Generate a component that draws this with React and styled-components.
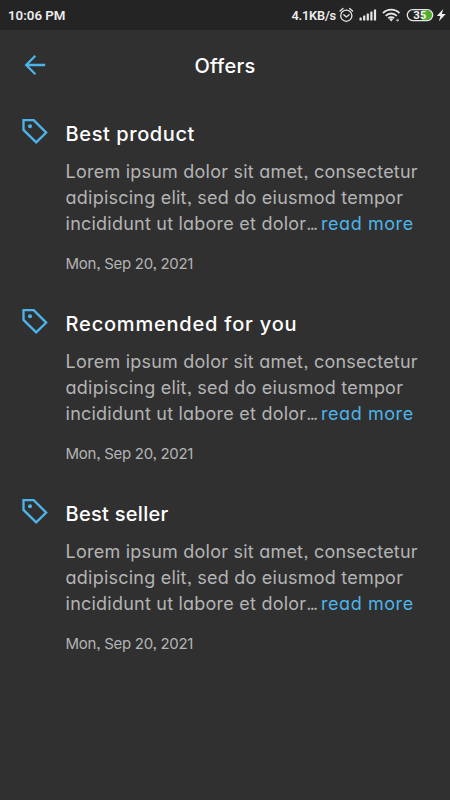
import React from 'react';
import styled, { createGlobalStyle } from 'styled-components';

const GlobalStyle = createGlobalStyle`
  * { box-sizing: border-box; }
  body { margin: 0; background: #303030; }
`;

const Screen = styled.div`
  width: 450px;
  height: 800px;
  overflow: hidden;
  background: #303030;
  color: #fff;
  font-family: Inter, 'Noto Sans', sans-serif;
  font-feature-settings: 'cv11' 1, 'ss03' 1;
`;

const StatusBar = styled.div`
  height: 30px;
  padding: 0 4px 0 8px;
  display: flex;
  align-items: center;
  justify-content: space-between;
  background: #242424;
  color: #ececec;
  font-family: Roboto, sans-serif;
  font-weight: 600;
`;

const Clock = styled.span`
  padding-top: 2px;
  font-size: 13.3px;
  line-height: 30px;
`;

const Speed = styled.span`
  padding-top: 2px;
  font-size: 12.8px;
  letter-spacing: -0.2px;
  line-height: 30px;
`;

const StatusGroup = styled.div`
  display: flex;
  align-items: center;
  height: 30px;
`;

const Header = styled.header`
  display: grid;
  grid-template-columns: 60px 1fr 60px;
  align-items: center;
  height: 70px;
`;

const BackButton = styled.button`
  display: flex;
  width: 24px;
  height: 24px;
  margin-left: 23px;
  padding: 0;
  border: 0;
  background: none;
  color: #4db4ea;
`;

const PageTitle = styled.h1`
  margin: 0;
  padding-top: 1px;
  text-align: center;
  font-size: 20px;
  font-weight: 500;
  line-height: 30px;
  letter-spacing: 0.3px;
`;

const OfferList = styled.main`
  display: flex;
  flex-direction: column;
  gap: 35px;
  padding: 19px 0 0 21px;
`;

const Offer = styled.article`
  display: grid;
  grid-template-columns: 28px 1fr;
  column-gap: 16px;
  height: 155px;
`;

const TagIcon = styled.svg`
  width: 28px;
  height: 28px;
  margin-top: -1px;
`;

const OfferTitle = styled.h2`
  margin: 0 0 10px;
  padding-left: 0.6px;
  font-size: 20px;
  font-weight: 500;
  line-height: 30px;
  letter-spacing: ${(p) => p.$spacing}px;
  white-space: nowrap;
`;

const Description = styled.p`
  margin: 0;
  padding-left: 0.6px;
  color: #b4b4b4;
  font-size: 18px;
  font-weight: 400;
  line-height: 26px;
  letter-spacing: 0.22px;
  white-space: nowrap;
`;

const Line = styled.span`
  display: block;
`;

const Dots = styled.span`
  letter-spacing: -1.8px;
`;

const ReadMore = styled.a`
  margin-left: 4.6px;
  color: #4db4ea;
  letter-spacing: 0.56px;
`;

const OfferDate = styled.time`
  display: block;
  margin-top: 17px;
  padding-left: 0.6px;
  color: #b4b4b4;
  font-size: 15px;
  line-height: 20px;
  letter-spacing: -0.28px;
`;

const offers = [
  { title: 'Best product', spacing: 0.58 },
  { title: 'Recommended for you', spacing: 0.8 },
  { title: 'Best seller', spacing: 0.28 },
];

function StatusIcons() {
  return (
    <svg width="110" height="30" viewBox="336 0 110 30" fill="none">
      <g stroke="#e6e6e6" strokeWidth="1.3" strokeLinecap="round" strokeLinejoin="round">
        <circle cx="346.3" cy="15.7" r="5.6" />
        <path d="M343.8 14.7l2.5 2.2 2.8-2.2M340 11l3-2.5M352.6 11l-3-2.5" />
      </g>
      <g fill="#e6e6e6">
        <rect x="359.5" y="17.5" width="2.2" height="3" rx=".5" />
        <rect x="363.1" y="15.5" width="2.2" height="5" rx=".5" />
        <rect x="366.7" y="13.5" width="2.2" height="7" rx=".5" />
        <rect x="370.3" y="11.5" width="2.2" height="9" rx=".5" />
        <rect x="373.9" y="9.5" width="2.2" height="11" rx=".5" />
      </g>
      <g stroke="#e6e6e6" strokeWidth="1.9">
        <path d="M383 13.1a11.5 11.5 0 0 1 16.4 0" />
        <path d="M385.7 15.8a7.7 7.7 0 0 1 11 0" />
        <path d="M388.3 18.3a4.1 4.1 0 0 1 5.8 0" />
      </g>
      <path d="M389.3 19.3a2.7 2.7 0 0 1 3.8 0l-1.9 2.1z" fill="#e6e6e6" />
      <circle cx="397.6" cy="20.3" r="1.3" fill="#a8a8a8" />
      <path d="M422 10.2h5.3a4.9 4.9 0 0 1 0 9.8H422z" fill="#4fae2c" />
      <rect x="407.3" y="9.6" width="25.4" height="11" rx="5.5" stroke="#e6e6e6" strokeWidth="1.3" />
      <text x="419.8" y="19.2" textAnchor="middle" fill="#f2f2f2" fontFamily="Roboto, sans-serif" fontSize="11.5" fontWeight="700">35</text>
      <path d="M443.2 9l-6.4 7h3.6l-1.5 5.3 6.9-7.2h-3.9z" fill="#eee" />
    </svg>
  );
}

function OfferItem({ title, spacing }) {
  return (
    <Offer>
      <TagIcon viewBox="0 0 28 28" fill="none">
        <path d="M2.5 2.2h10.2L25.2 14.6 15.2 24.3 2.5 11.9z" stroke="#4db4ea" strokeWidth="2.3" />
        <circle cx="9" cy="8.3" r="2" fill="#4db4ea" />
      </TagIcon>
      <div>
        <OfferTitle $spacing={spacing}>{title}</OfferTitle>
        <Description>
          <Line>Lorem ipsum dolor sit amet, consectetur</Line>
          <Line>adipiscing elit, sed do eiusmod tempor</Line>
          <Line>
            incididunt ut labore et dolor<Dots>...</Dots>
            <ReadMore>read more</ReadMore>
          </Line>
        </Description>
        <OfferDate>Mon, Sep 20, 2021</OfferDate>
      </div>
    </Offer>
  );
}

export default function App() {
  return (
    <>
      <GlobalStyle />
      <Screen>
        <StatusBar>
          <Clock>10:06 PM</Clock>
          <StatusGroup>
            <Speed>4.1KB/s</Speed>
            <StatusIcons />
          </StatusGroup>
        </StatusBar>
        <Header>
          <BackButton aria-label="Back">
            <svg width="24" height="24" viewBox="0 0 24 24" fill="none">
              <path d="M22.2 12H3.5M12.4 2.8L3.2 12l9.2 9.2" stroke="currentColor" strokeWidth="2.3" />
            </svg>
          </BackButton>
          <PageTitle>Offers</PageTitle>
        </Header>
        <OfferList>
          {offers.map((offer) => (
            <OfferItem key={offer.title} {...offer} />
          ))}
        </OfferList>
      </Screen>
    </>
  );
}
